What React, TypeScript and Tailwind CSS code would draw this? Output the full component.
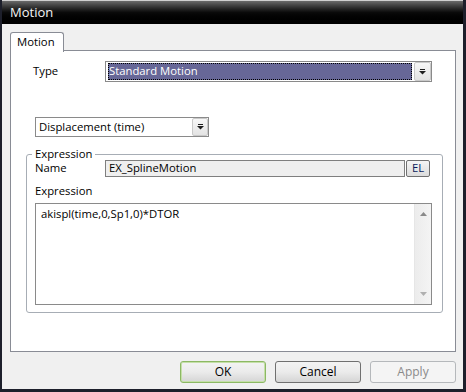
import type { ReactNode } from 'react';

function DropArrow() {
  return (
    <svg width="7" height="6" viewBox="0 0 7 6">
      <rect x="1" y="0" width="5" height="1" fill="#1e1e1e" />
      <path d="M0 2h7L3.5 5.5z" fill="#1e1e1e" />
    </svg>
  );
}

function DropButton({ className = '' }: { className?: string }) {
  return (
    <div
      className={`flex items-center justify-center border border-[#c9c9c9] bg-gradient-to-b from-[#f7f7f7] to-[#e3e3e3] rounded-[2px] ${className}`}
    >
      <DropArrow />
    </div>
  );
}

function DialogButton({
  children,
  tone = 'normal',
}: {
  children: ReactNode;
  tone?: 'normal' | 'default' | 'disabled';
}) {
  const border =
    tone === 'default'
      ? 'border-[#8cb864] shadow-[inset_0_0_0_1px_#c5e0a8]'
      : tone === 'disabled'
        ? 'border-[#b5b8bb]'
        : 'border-[#707070]';
  const bg =
    tone === 'disabled'
      ? 'bg-[#f4f4f4]'
      : 'bg-gradient-to-b from-[#f3f3f3] via-[#ebebeb] to-[#d5d5d5]';
  const text = tone === 'disabled' ? 'text-[#8a8a8a]' : 'text-black';
  return (
    <button
      type="button"
      className={`w-[86px] h-[22px] rounded-[3px] border ${border} ${bg} ${text} text-[12px] leading-none flex items-center justify-center`}
    >
      {children}
    </button>
  );
}

export default function App() {
  return (
    <div className="w-[466px] h-[392px] flex flex-col bg-[#1d1f2b] font-['Open_Sans',sans-serif] text-[11.3px] text-black">
      {/* window frame */}
      <div className="flex flex-col flex-1 ml-[2px] mr-[3px] mb-[3px] border-t border-[#cfcfcf]">
        <div className="h-[23px] flex items-center pl-[8px] bg-gradient-to-b from-[#6a6a6a] via-[#0a0a0a] to-black text-[13px] text-[#f4f4f4]">
          Motion
        </div>

        <div className="flex-1 flex flex-col bg-[#f0f0f0] pl-[8px] pr-[7px] pt-[8px]">
          {/* tab strip */}
          <div className="flex h-[19px] -mb-px relative z-10">
            <div className="w-[54px] h-[20px] bg-white border border-[#898c95] border-b-0 rounded-t-[3px] pl-[6px] pt-[1px]">
              Motion
            </div>
          </div>

          {/* tab page */}
          <div className="h-[302px] bg-white border border-[#898c95] flex flex-col">
            <div className="flex items-center mt-[10px] ml-[22px]">
              <span className="w-[72px]">Type</span>
              <div className="w-[327px] h-[21px] border border-[#8a8a8a] flex items-center bg-white">
                <div className="flex-1 h-[17px] ml-[2px] mr-[2px] bg-[#676797] outline outline-1 outline-dotted outline-black -outline-offset-1 text-white flex items-center pl-[1px]">
                  Standard Motion
                </div>
                <DropButton className="w-[17px] h-[19px]" />
              </div>
            </div>

            <div className="mt-[35px] ml-[24px] w-[174px] h-[20px] border border-[#8a8a8a] flex items-center bg-white">
              <span className="flex-1 pl-[3px]">Displacement (time)</span>
              <DropButton className="w-[16px] h-[18px]" />
            </div>

            {/* Expression group */}
            <div className="relative mt-[17px] ml-[15px] w-[417px] h-[159px] border border-[#a7adb5] rounded-[3px] flex flex-col pl-[8px] pr-[10px] pt-[5px]">
              <span className="absolute -top-[8px] left-[5px] bg-white px-[3px] leading-[14px]">
                Expression
              </span>
              <div className="flex items-center">
                <span className="w-[70px]">Name</span>
                <div className="w-[300px] h-[17px] border border-[#7f7f7f] bg-[#efefef] flex items-center pl-[3px]">
                  EX_SplineMotion
                </div>
                <div className="ml-[1px] w-[24px] h-[17px] border border-[#707070] rounded-[2px] bg-gradient-to-b from-[#f5f5f5] to-[#dcdcdc] flex items-center justify-center text-[#0b1a5c]">
                  EL
                </div>
              </div>
              <div className="mt-[5px] leading-[17px]">Expression</div>
              <div className="mt-[4px] h-[102px] border border-[#8a8a8a] flex">
                <div className="flex-1 pl-[5px] pt-[2px]">akispl(time,0,Sp1,0)*DTOR</div>
                <div className="w-[17px] bg-gradient-to-r from-[#ececec] to-[#f4f4f4] border-l border-[#e6e6e6] flex flex-col items-center justify-between py-[8px]">
                  <svg width="7" height="4" viewBox="0 0 7 4">
                    <path d="M0 4L3.5 0L7 4z" fill="#8a8a8a" />
                  </svg>
                  <svg width="7" height="4" viewBox="0 0 7 4">
                    <path d="M0 0h7L3.5 4z" fill="#b0b0b0" />
                  </svg>
                </div>
              </div>
            </div>
          </div>

          {/* dialog buttons */}
          <div className="flex justify-end gap-[9px] mt-[9px]">
            <DialogButton tone="default">OK</DialogButton>
            <DialogButton>Cancel</DialogButton>
            <DialogButton tone="disabled">Apply</DialogButton>
          </div>
        </div>
      </div>
    </div>
  );
}
